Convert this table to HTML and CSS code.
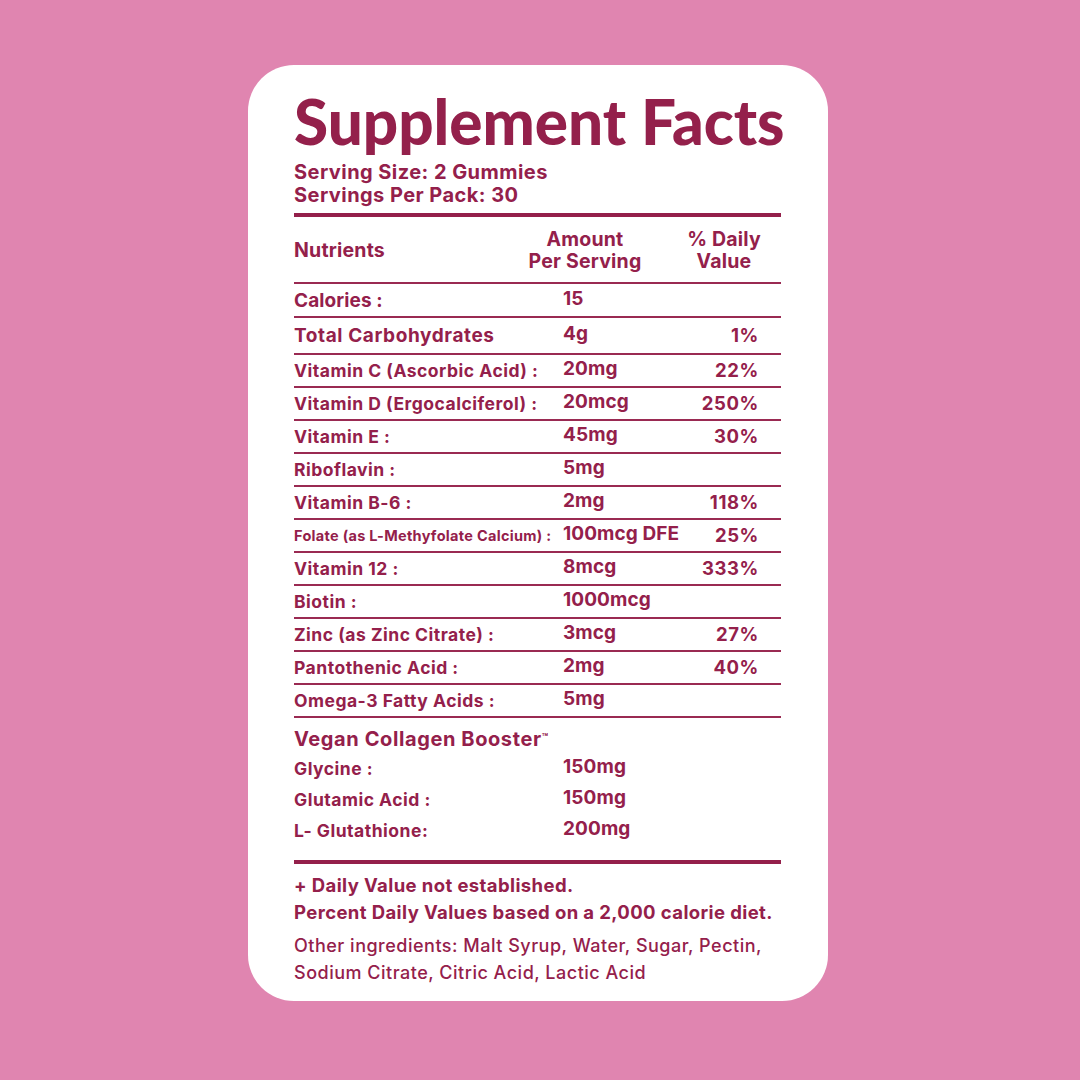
FILE: index.html
```html
<!DOCTYPE html>
<html lang="en">
<head>
<meta charset="utf-8">
<title>Supplement Facts</title>
<link rel="stylesheet" href="styles.css">
</head>
<body>
<div class="page">
  <div class="card">
    <h1 class="title">Supplement Facts</h1>
    <div class="serving">
      <div>Serving Size: 2 Gummies</div>
      <div>Servings Per Pack: 30</div>
    </div>
    <div class="rule-thick"></div>
    <div class="thead">
      <div class="th-nutrients">Nutrients</div>
      <div class="th-center">Amount<br>Per Serving</div>
      <div class="th-center">% Daily<br>Value</div>
    </div>
    <div class="row big first"><span class="lbl">Calories :</span><span class="amt">15</span><span class="pct"></span></div>
    <div class="row big second"><span class="lbl">Total Carbohydrates</span><span class="amt">4g</span><span class="pct">1%</span></div>
    <div class="row"><span class="lbl">Vitamin C (Ascorbic Acid) :</span><span class="amt">20mg</span><span class="pct">22%</span></div>
    <div class="row"><span class="lbl">Vitamin D (Ergocalciferol) :</span><span class="amt">20mcg</span><span class="pct">250%</span></div>
    <div class="row"><span class="lbl">Vitamin E :</span><span class="amt">45mg</span><span class="pct">30%</span></div>
    <div class="row"><span class="lbl">Riboflavin :</span><span class="amt">5mg</span><span class="pct"></span></div>
    <div class="row"><span class="lbl">Vitamin B-6 :</span><span class="amt">2mg</span><span class="pct">118%</span></div>
    <div class="row"><span class="lbl small">Folate (as L-Methyfolate Calcium) :</span><span class="amt">100mcg DFE</span><span class="pct">25%</span></div>
    <div class="row"><span class="lbl">Vitamin 12 :</span><span class="amt">8mcg</span><span class="pct">333%</span></div>
    <div class="row"><span class="lbl">Biotin :</span><span class="amt">1000mcg</span><span class="pct"></span></div>
    <div class="row"><span class="lbl">Zinc (as Zinc Citrate) :</span><span class="amt">3mcg</span><span class="pct">27%</span></div>
    <div class="row"><span class="lbl">Pantothenic Acid :</span><span class="amt">2mg</span><span class="pct">40%</span></div>
    <div class="row"><span class="lbl">Omega-3 Fatty Acids :</span><span class="amt">5mg</span><span class="pct"></span></div>
    <div class="section">Vegan Collagen Booster<sup class="tm">™</sup></div>
    <div class="row plain"><span class="lbl">Glycine :</span><span class="amt">150mg</span><span class="pct"></span></div>
    <div class="row plain"><span class="lbl">Glutamic Acid :</span><span class="amt">150mg</span><span class="pct"></span></div>
    <div class="row plain"><span class="lbl">L- Glutathione:</span><span class="amt">200mg</span><span class="pct"></span></div>
    <div class="rule-thick bottom"></div>
    <div class="notes">
      <p>+ Daily Value not established.</p>
      <p>Percent Daily Values based on a 2,000 calorie diet.</p>
    </div>
    <p class="other">Other ingredients: Malt Syrup, Water, Sugar, Pectin,<br>Sodium Citrate, Citric Acid, Lactic Acid</p>
  </div>
</div>
</body>
</html>
```

FILE: styles.css
```css
* { box-sizing: border-box; }
html, body { margin: 0; padding: 0; }
body {
  width: 1080px;
  height: 1080px;
  background: #e085b0;
  font-family: "Inter", "Lato", "Liberation Sans", sans-serif;
  color: #94204b;
}
.page {
  width: 1080px;
  height: 1080px;
  display: flex;
  justify-content: flex-start;
  align-items: flex-start;
  padding: 65px 0 0 248px;
}
.card {
  width: 580px;
  height: 936px;
  background: #ffffff;
  border-radius: 46px;
  padding: 22px 47px 0 46px;
  display: flex;
  flex-direction: column;
}
.title {
  margin: 0;
  font-family: "Lato", sans-serif;
  font-size: 62px;
  font-weight: 900;
  line-height: 68px;
  letter-spacing: 0;
  white-space: nowrap;
}
.serving {
  margin-top: 6px;
  font-size: 20px;
  font-weight: 700;
  line-height: 23px;
  letter-spacing: 0.45px;
}
.rule-thick {
  height: 4px;
  background: #94204b;
  margin-top: 6px;
}
.thead {
  display: grid;
  grid-template-columns: 1fr 116px 76px;
  column-gap: 43px;
  padding-right: 19px;
  align-items: center;
  font-size: 19.5px;
  font-weight: 700;
  line-height: 22px;
  padding-top: 11px;
  padding-bottom: 10px;
  border-bottom: 2px solid #9a2a52;
  letter-spacing: 0.2px;
}
.th-center { text-align: center; white-space: nowrap; }
.row {
  display: grid;
  grid-template-columns: 269px 1fr 70px;
  padding-right: 22px;
  align-items: center;
  height: 33px;
  border-bottom: 2px solid #9a2a52;
  font-weight: 700;
  font-size: 17.5px;
}
.lbl { white-space: nowrap; letter-spacing: 0.5px; }
.row.big .lbl { font-size: 19px; letter-spacing: 0.6px; }
.row.first { height: 34px; }
.row.first .lbl { letter-spacing: 0.1px; }
.row.second { height: 37px; }
.lbl.small { font-size: 14.5px; letter-spacing: 0.3px; }
.amt { font-size: 19px; white-space: nowrap; position: relative; top: -2px; letter-spacing: 0.1px; }
.pct { text-align: right; font-size: 18.5px; position: relative; top: -1px; letter-spacing: 0.6px; }
.row.plain { border-bottom: none; height: 31px; }
.section {
  font-size: 20px;
  font-weight: 700;
  margin-top: 7px;
  line-height: 28px;
  letter-spacing: 0.6px;
}
.tm { font-size: 10px; vertical-align: top; position: relative; top: -2px; }
.rule-thick.bottom { margin-top: 14px; }
.notes { margin-top: 8px; font-size: 18.5px; font-weight: 700; letter-spacing: 0.4px; }
.notes p { margin: 0; line-height: 27px; }
.other {
  margin: 6px 0 0;
  font-size: 18px;
  font-weight: 500;
  line-height: 27px;
  letter-spacing: 0.5px;
  white-space: nowrap;
}
```
